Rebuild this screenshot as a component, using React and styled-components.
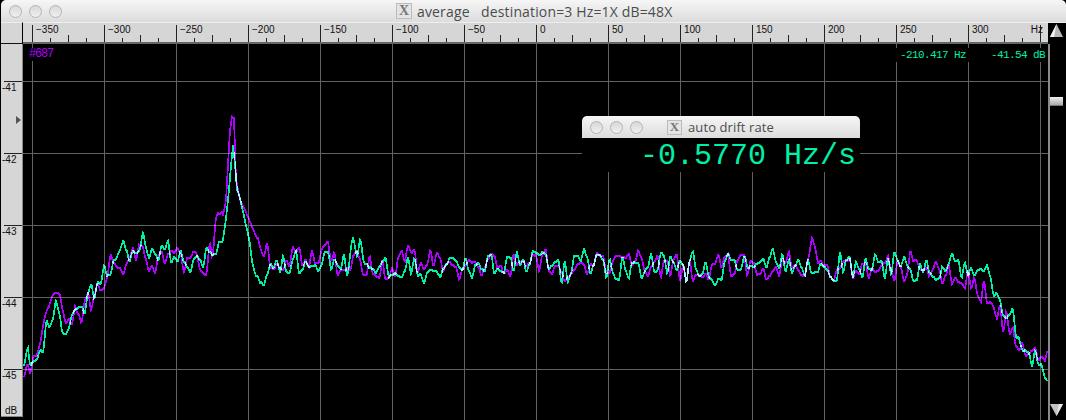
import React from 'react';
import styled, { createGlobalStyle } from 'styled-components';

const GREEN = '#00f0a8';
const PURPLE = '#b000ff';
const GRID = '#626262';

const GlobalStyle = createGlobalStyle`
  html, body {
    margin: 0;
    padding: 0;
    background: #000;
    overflow: hidden;
  }
`;

const Window = styled.div`
  position: relative;
  width: 1066px;
  height: 420px;
  display: flex;
  flex-direction: column;
  background: #000;
  font-family: 'Liberation Sans', Arial, sans-serif;
  overflow: hidden;
`;

const TitleBar = styled.div`
  height: 22px;
  flex: none;
  display: flex;
  align-items: center;
  padding-left: 8px;
  margin-left: ${(p) => (p.$small ? 0 : 1)}px;
  border-radius: 5px 5px 0 0;
  background: linear-gradient(#f6f6f6, #dcdcdc);
`;

const Lights = styled.div`
  display: flex;
  gap: 7px;
`;

const Light = styled.span`
  width: 11px;
  height: 11px;
  border-radius: 50%;
  border: 1px solid #b4b4b4;
  background: linear-gradient(#d8d8d8, #f0f0f0);
`;

const TitleGroup = styled.div`
  display: flex;
  align-items: center;
  gap: ${(p) => p.$gap}px;
  margin-left: ${(p) => p.$offset}px;
`;

const XBadge = styled.span`
  width: ${(p) => p.$size}px;
  height: ${(p) => p.$size}px;
  flex: none;
  display: flex;
  align-items: center;
  justify-content: center;
  background: #e4e4e4;
  border: 1px solid #bcbcbc;
  color: #777;
  font: bold ${(p) => p.$size}px 'Liberation Serif', serif;
`;

const TitleText = styled.span`
  font: ${(p) => p.$size}px 'Open Sans', 'DejaVu Sans', sans-serif;
  letter-spacing: ${(p) => p.$track}px;
  color: #4c4c4c;
  white-space: pre;
`;

const RulerRow = styled.div`
  height: 22px;
  flex: none;
  display: flex;
  margin-left: 1px;
`;

const Corner = styled.div`
  width: 22px;
  flex: none;
  background: #d6d6d6;
  border-top: 1px solid #eee;
  border-bottom: 1px solid #111;
  border-right: 1px solid #000;
  box-sizing: border-box;
`;

const Ruler = styled.div`
  position: relative;
  width: 1025px;
  flex: none;
  display: flex;
  box-sizing: border-box;
  padding-left: 9px;
  background: #d6d6d6;
  border-top: 1px solid #eee;
  border-bottom: 2px solid #666;
  overflow: hidden;
`;

const RulerCell = styled.div`
  width: 72px;
  flex: none;
  box-sizing: border-box;
  border-left: 1px solid #222;
  margin-top: 2px;
  display: flex;
  flex-direction: column;
  justify-content: space-between;
`;

const RulerLabel = styled.span`
  font-size: 10px;
  line-height: 10px;
  padding-left: 3px;
  color: #111;
`;

const TickRow = styled.div`
  display: flex;
  align-items: flex-end;
  margin-left: -1px;
`;

const Tick = styled.span`
  width: 18px;
  height: ${(p) => p.$h}px;
  box-sizing: border-box;
  border-left: 1px solid #222;
`;

const HzLabel = styled.span`
  position: absolute;
  right: 5px;
  top: 2px;
  font-size: 10px;
  line-height: 10px;
  color: #111;
`;

const ScrollCap = styled.div`
  flex: 1;
  background: #000;
  border-top: 1px solid #eee;
`;

const Body = styled.div`
  flex: 1;
  display: flex;
  margin-left: 1px;
  min-height: 0;
`;

const DbRail = styled.div`
  position: relative;
  width: 22px;
  height: 373px;
  flex: none;
  box-sizing: border-box;
  padding-top: 37px;
  display: flex;
  flex-direction: column;
  background: #d6d6d6;
  border-right: 1px solid #8a8a8a;
  border-bottom: 1px solid #8a8a8a;
`;

const DbCell = styled.div`
  height: ${(p) => p.$h}px;
  flex: none;
  margin-left: 3px;
  border-top: 1px solid #222;
  box-sizing: border-box;
  font-size: 10px;
  line-height: 10px;
  padding-top: 1px;
  color: #111;
  text-indent: -2px;
`;

const DbUnit = styled.span`
  margin-top: auto;
  padding-left: 4px;
  font-size: 10px;
  line-height: 11px;
  color: #111;
`;

const Marker = styled.span`
  position: absolute;
  top: 72px;
  left: 15px;
  border-left: 5px solid #555;
  border-top: 4.5px solid transparent;
  border-bottom: 4.5px solid transparent;
`;

const Plot = styled.div`
  position: relative;
  width: 1025px;
  flex: none;
  background: #000;
`;

const ChartSvg = styled.svg`
  display: block;
  isolation: isolate;
`;

const Trace = styled.polyline`
  fill: none;
  stroke: ${(p) => p.$color};
  stroke-width: 1.7;
  mix-blend-mode: screen;
`;

const FrameLabel = styled.span`
  position: absolute;
  left: 6px;
  top: 4px;
  background: #000;
  font: 12px/13px 'Liberation Mono', monospace;
  letter-spacing: -1.2px;
  color: ${PURPLE};
`;

const Readouts = styled.div`
  position: absolute;
  top: 4px;
  right: 3px;
  height: 14px;
  width: 145px;
  padding-left: 4px;
  display: flex;
  justify-content: space-between;
  background: #000;
  font: 11px/15px 'Liberation Mono', monospace;
  letter-spacing: -0.6px;
  color: ${GREEN};
`;

const ScrollColumn = styled.div`
  flex: 1;
  display: flex;
  flex-direction: column;
  align-items: flex-start;
  box-sizing: border-box;
  border-left: 2px solid #8a8a8a;
  height: 376px;
  padding-bottom: 3px;
`;

const ArrowIcon = styled.svg`
  display: block;
  flex: none;
  margin-top: ${(p) => (p.$down ? 'auto' : '0')};
`;

const UpArrowSlot = styled.div`
  position: absolute;
  top: 24px;
  left: 1050px;
`;

const Thumb = styled.span`
  width: 13px;
  height: 8px;
  margin-top: 53px;
  background: linear-gradient(#f0f0f0, #aaa);
  border-bottom: 1px solid #777;
`;

const Popup = styled.div`
  position: absolute;
  left: 582px;
  top: 116px;
  width: 278px;
  height: 56px;
  display: flex;
  flex-direction: column;
  background: #000;
`;

const DriftValue = styled.div`
  height: 34px;
  text-align: right;
  padding-right: 4px;
  font: 30px/37px 'Liberation Mono', monospace;
  color: ${GREEN};
`;

const mulberry = (seed) => () => {
  seed = (seed + 0x6d2b79f5) | 0;
  let t = Math.imul(seed ^ (seed >>> 15), 1 | seed);
  t = (t + Math.imul(t ^ (t >>> 7), 61 | t)) ^ t;
  return ((t ^ (t >>> 14)) >>> 0) / 4294967296;
};

const lerp = (pts, x) => {
  for (let i = 1; i < pts.length; i++) {
    if (x <= pts[i][0]) {
      const [x0, y0] = pts[i - 1];
      const [x1, y1] = pts[i];
      return y0 + ((y1 - y0) * (x - x0)) / (x1 - x0 || 1);
    }
  }
  return pts[pts.length - 1][1];
};

const MID = [
  [275, 260], [350, 262], [420, 268], [520, 268], [600, 264], [700, 270], [760, 265],
  [840, 268], [940, 268],
];

const purpleEnv = [
  [24, 380], [30, 366], [37, 352], [42, 338], [46, 318], [50, 304], [60, 296], [68, 316],
  [76, 316], [84, 306], [92, 294], [104, 276], [112, 264], [125, 262], [200, 263],
  [212, 252], [218, 226], [222, 222], [226, 200], [228, 165], [230, 130], [232, 118],
  [234, 118], [236, 178], [240, 200], [245, 210], [250, 222], [255, 235], [262, 248],
  ...MID,
  [965, 276], [985, 292], [1000, 318], [1020, 336], [1045, 362],
];
const greenEnv = [
  [24, 376], [28, 352], [40, 348], [50, 326], [56, 314], [64, 322], [72, 324], [85, 304],
  [95, 288], [105, 270], [118, 258], [200, 260],
  [215, 254], [222, 248], [226, 220], [229, 190], [231, 165], [233, 145], [235, 165],
  [237, 190], [240, 198], [243, 210], [247, 230], [250, 245], [252, 262], [256, 276],
  [260, 278], [266, 262],
  ...MID,
  [965, 272], [985, 274], [1000, 302], [1010, 306], [1020, 340], [1045, 370],
];

// sharp spots that stand out of the noise floor: [x, height, width]
const purpleBumps = [[325, 12, 3], [408, 8, 3], [527, 6, 3], [814, 24, 2], [755, 8, 3]];
const greenBumps = [[145, 20, 2], [353, 26, 2], [361, 14, 2], [745, 14, 2], [905, 14, 3], [648, 8, 3]];

const trace = (env, bumps, seed) => {
  const rnd = mulberry(seed);
  const fine = [];
  const broad = [];
  for (let i = 0; i < 400; i++) {
    fine.push(rnd() * 2 - 1);
    broad.push(rnd() * 2 - 1);
  }
  const sample = (table, k) => {
    const i = Math.floor(k);
    const f = k - i;
    const s = f * f * (3 - 2 * f);
    return table[i] * (1 - s) + table[i + 1] * s;
  };
  const pts = [];
  for (let x = 24; x <= 1047; x++) {
    const n = sample(fine, (x - 24) / 3.2) * 13 + sample(broad, (x - 24) / 10) * 7;
    const quiet = x > 222 && x < 258 ? 0.12 : 1;
    let y = lerp(env, x) + n * quiet;
    bumps.forEach(([bx, h, w]) => {
      y -= h * Math.exp(-((x - bx) * (x - bx)) / (2 * w * w));
    });
    pts.push(`${x - 23},${Math.round(y) - 44}`);
  }
  return pts.join(' ');
};

const PURPLE_POINTS = trace(purpleEnv, purpleBumps, 687);
const GREEN_POINTS = trace(greenEnv, greenBumps, 4151);

const RULER = [-350, -300, -250, -200, -150, -100, -50, 0, 50, 100, 150, 200, 250, 300, ''];
const DB = ['-41', '-42', '-43', '-44'];
const GRID_X = Array.from({ length: 15 }, (_, i) => 9 + i * 72);
const GRID_Y = [37, 109, 181, 253, 325];

const TrafficLights = () => (
  <Lights>
    <Light />
    <Light />
    <Light />
  </Lights>
);

const ScrollArrow = ({ down }) => (
  <ArrowIcon $down={down} width="13" height="13" viewBox="0 0 13 13">
    {down ? (
      <>
        <polygon points="0,0 13,0 6.5,12" fill="#c4c4c4" />
        <polygon points="6.5,12 13,0 9,0" fill="#e8e8e8" />
      </>
    ) : (
      <>
        <polygon points="6.5,0 13,13 0,13" fill="#b8b8b8" />
        <polygon points="6.5,0 0,13 4,13" fill="#f4f4f4" />
      </>
    )}
  </ArrowIcon>
);

export default function App() {
  return (
    <Window>
      <GlobalStyle />
      <TitleBar>
        <TrafficLights />
        <TitleGroup $offset={334} $gap={5}>
          <XBadge $size={14}>X</XBadge>
          <TitleText $size={14} $track={0.15}>average   destination=3 Hz=1X dB=48X</TitleText>
        </TitleGroup>
      </TitleBar>
      <RulerRow>
        <Corner />
        <Ruler>
          {RULER.map((value) => (
            <RulerCell key={value}>
              <RulerLabel>{value === '' ? '\u00a0' : String(value).replace('-', '\u2212')}</RulerLabel>
              <TickRow>
                <Tick $h={0} />
                <Tick $h={4} />
                <Tick $h={7} />
                <Tick $h={4} />
              </TickRow>
            </RulerCell>
          ))}
          <HzLabel>Hz</HzLabel>
        </Ruler>
        <ScrollCap />
      </RulerRow>
      <Body>
        <DbRail>
          {DB.map((label) => (
            <DbCell key={label} $h={72}>{label}</DbCell>
          ))}
          <DbCell $h={30}>-45</DbCell>
          <Marker />
          <DbUnit>dB</DbUnit>
        </DbRail>
        <Plot>
          <ChartSvg width="1025" height="376" shapeRendering="crispEdges">
            {GRID_X.map((x) => (
              <line key={x} x1={x + 0.5} x2={x + 0.5} y1="0" y2="376" stroke={GRID} />
            ))}
            {GRID_Y.map((y) => (
              <line key={y} x1="0" x2="1025" y1={y + 0.5} y2={y + 0.5} stroke={GRID} />
            ))}
            <Trace points={PURPLE_POINTS} $color={PURPLE} />
            <Trace points={GREEN_POINTS} $color={GREEN} />
          </ChartSvg>
          <FrameLabel>#687</FrameLabel>
          <Readouts>
            <span>-210.417 Hz</span>
            <span>-41.54 dB</span>
          </Readouts>
        </Plot>
        <ScrollColumn>
          <Thumb />
          <ScrollArrow down />
        </ScrollColumn>
      </Body>
      <UpArrowSlot>
        <ScrollArrow />
      </UpArrowSlot>
      <Popup>
        <TitleBar $small>
          <TrafficLights />
          <TitleGroup $offset={24} $gap={6}>
            <XBadge $size={13}>X</XBadge>
            <TitleText $size={13} $track={0.1}>auto drift rate</TitleText>
          </TitleGroup>
        </TitleBar>
        <DriftValue>-0.5770 Hz/s</DriftValue>
      </Popup>
    </Window>
  );
}
